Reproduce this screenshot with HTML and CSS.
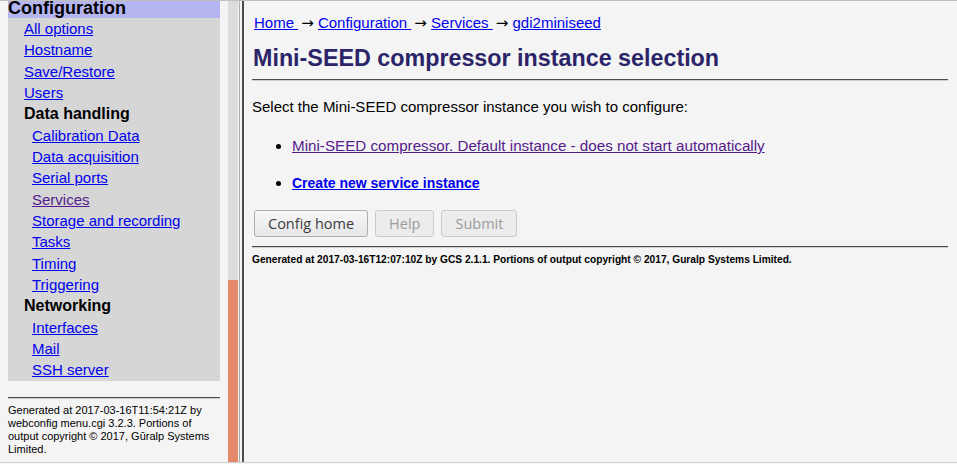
FILE: index.html
```html
<!DOCTYPE html>
<html lang="en">
<head>
  <meta charset="UTF-8">
  <title>Mini-SEED compressor instance selection</title>
  <link rel="stylesheet" href="styles.css">
</head>
<body>
  <div class="window">
    <div class="menu-frame">
      <div class="menu-scroll">
        <div class="menu">
          <h2 class="menu-title">Configuration</h2>
          <ul class="menu-list">
            <li><a href="#">All options</a></li>
            <li><a href="#">Hostname</a></li>
            <li><a href="#">Save/Restore</a></li>
            <li><a href="#">Users</a></li>
            <li class="group">Data handling</li>
            <li class="sub"><a href="#">Calibration Data</a></li>
            <li class="sub"><a href="#">Data acquisition</a></li>
            <li class="sub"><a href="#">Serial ports</a></li>
            <li class="sub"><a href="#" class="visited">Services</a></li>
            <li class="sub"><a href="#">Storage and recording</a></li>
            <li class="sub"><a href="#">Tasks</a></li>
            <li class="sub"><a href="#">Timing</a></li>
            <li class="sub"><a href="#">Triggering</a></li>
            <li class="group">Networking</li>
            <li class="sub"><a href="#">Interfaces</a></li>
            <li class="sub"><a href="#">Mail</a></li>
            <li class="sub"><a href="#">SSH server</a></li>
          </ul>
        </div>
        <hr class="rule">
        <p class="menu-footer">Generated at 2017-03-16T11:54:21Z by webconfig menu.cgi 3.2.3. Portions of output copyright &copy; 2017, G&#363;ralp Systems Limited.</p>
      </div>
    </div>
    <div class="scrollbar"><div class="thumb"></div></div>
    <div class="divider"></div>
    <div class="main-frame">
      <p class="crumbs">
        <a href="#">Home </a><span class="arrow">&rarr;</span> <a href="#">Configuration </a><span class="arrow">&rarr;</span> <a href="#">Services </a><span class="arrow">&rarr;</span> <a href="#">gdi2miniseed</a>
      </p>
      <h1 class="title">Mini-SEED compressor instance selection</h1>
      <hr class="rule">
      <p class="intro">Select the Mini-SEED compressor instance you wish to configure:</p>
      <ul class="instances">
        <li><a href="#" class="visited">Mini-SEED compressor. Default instance - does not start automatically</a></li>
        <li><a href="#" class="strong">Create new service instance</a></li>
      </ul>
      <div class="buttons">
        <button type="button">Config home</button>
        <button type="button" disabled>Help</button>
        <button type="button" disabled>Submit</button>
      </div>
      <hr class="rule">
      <p class="page-footer">Generated at 2017-03-16T12:07:10Z by GCS 2.1.1. Portions of output copyright &copy; 2017, Guralp Systems Limited.</p>
    </div>
  </div>
</body>
</html>
```

FILE: styles.css
```css
html, body {
  margin: 0;
  height: 100%;
}

body {
  font-family: 'Liberation Sans', Arial, sans-serif;
  background: #f4f4f4;
  color: #000;
  overflow: hidden;
}

a {
  color: #0000ee;
}

a.visited {
  color: #551a8b;
}

.window {
  display: flex;
  height: 461px;
  border-top: 1px solid #c3c0bb;
  border-bottom: 1px solid #d3d3d3;
}

/* left frame */
.menu-frame {
  width: 228px;
  overflow: hidden;
}

.menu-scroll {
  margin-top: -3px;
  padding: 0 8px;
}

.menu {
  background: #d6d6d6;
  width: 212px;
}

.menu-title {
  margin: 0;
  height: 20px;
  line-height: 20px;
  font-size: 18px;
  background: #b5b5f2;
}

.menu-list {
  list-style: none;
  margin: 0;
  padding: 0;
  font-size: 15px;
  line-height: 21.33px;
}

.menu-list li {
  padding-left: 16px;
}

.menu-list li.sub {
  padding-left: 24px;
}

.menu-list li.group {
  font-weight: bold;
  font-size: 16px;
}

.rule {
  margin: 16px 0 0;
  border: 0;
  border-top: 1px solid #4a4a4a;
  border-bottom: 1px solid #cfcfcf;
  height: 0;
}

.menu-footer {
  margin: 5px 0 0;
  font-size: 11px;
  line-height: 13.3px;
}

/* scrollbar + frame border */
.scrollbar {
  width: 10px;
  background: #dcdcdc;
  display: flex;
  flex-direction: column;
  justify-content: flex-end;
}

.thumb {
  height: 182px;
  background: #e6896a;
}

.divider {
  width: 6px;
  background: linear-gradient(to right, #f4f4f4 0 1px, #ababab 1px 2px, #f4f4f4 2px 4px, #4b4b4b 4px 6px);
}

/* right frame */
.main-frame {
  flex: 1;
  padding: 0 9px 0 8px;
}

.crumbs {
  margin: 12px 0 0 2px;
  font-size: 15px;
  line-height: 20px;
}

.arrow {
  font-family: 'DejaVu Sans', sans-serif;
  font-size: 15px;
  padding-left: 3px;
}

.title {
  margin: 11px 0 0 1px;
  font-size: 23.3px;
  line-height: 28px;
  color: #2b2468;
}

.main-frame .rule {
  margin-top: 7px;
}

.intro {
  margin: 16px 0 0;
  font-size: 15px;
  line-height: 20px;
}

.instances {
  margin: 19px 0 0;
  padding-left: 40px;
  font-size: 15.2px;
  line-height: 20px;
}

.instances li {
  margin-bottom: 17px;
}

.instances a.strong {
  font-weight: bold;
  font-size: 14px;
}

.buttons {
  display: flex;
  gap: 7px;
  margin: 0 0 0 2px;
}

.buttons button {
  font-family: 'Open Sans', 'DejaVu Sans', sans-serif;
  font-size: 14.5px;
  height: 27px;
  padding: 0 13px;
  color: #3c3c3c;
  border: 1px solid #aeaeae;
  border-radius: 3px;
  background: linear-gradient(#f7f7f7, #e7e7e7);
}

.buttons button:disabled {
  color: #9b9b9b;
  border-color: #cbcbcb;
  background: #ececec;
}

.main-frame .buttons + .rule {
  margin-top: 9px;
}

.page-footer {
  margin: 5px 0 0;
  font-size: 10.2px;
  font-weight: bold;
  line-height: 13px;
}
```
